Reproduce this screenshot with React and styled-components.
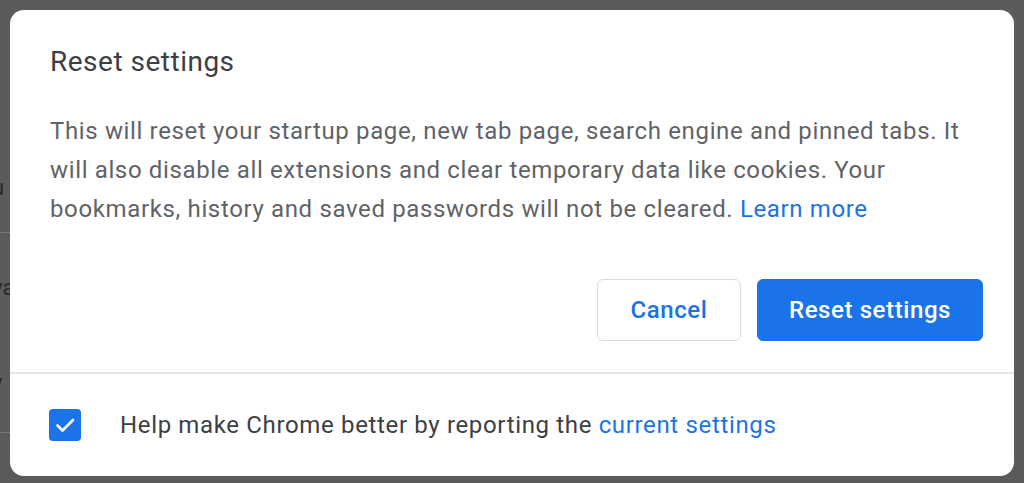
import React from "react";
import styled, { createGlobalStyle } from "styled-components";

const Global = createGlobalStyle`
  html, body { margin: 0; padding: 0; }
  body {
    width: 1024px;
    height: 483px;
    overflow: hidden;
    background: #5b5b5b;
    font-family: Roboto, "Noto Sans", "Liberation Sans", sans-serif;
  }
`;

const Backdrop = styled.div`
  position: relative;
  width: 1024px;
  height: 483px;
  background: #5b5b5b;
  overflow: hidden;
`;

const BehindText = styled.div`
  position: absolute;
  left: -8px;
  top: ${(p) => p.$top}px;
  font-size: 22px;
  color: #2a2a2a;
`;

const BehindLine = styled.div`
  position: absolute;
  left: 0;
  width: 12px;
  top: ${(p) => p.$top}px;
  height: 1px;
  background: #777;
`;

const Dialog = styled.div`
  position: absolute;
  left: 10px;
  top: 10px;
  width: 1004px;
  height: 466px;
  background: #fff;
  border-radius: 14px;
  box-sizing: border-box;
  display: flex;
  flex-direction: column;
  overflow: hidden;
`;

const Body = styled.div`
  padding: 34px 31px 0 40px;
  display: flex;
  flex-direction: column;
`;

const Title = styled.h1`
  margin: 0;
  font-size: 28px;
  font-weight: 400;
  color: #3c4043;
  line-height: 36px;
  letter-spacing: 0.5px;
`;

const Text = styled.p`
  margin: 32px 0 0;
  font-size: 24px;
  line-height: 39px;
  color: #5f6368;
  letter-spacing: 0.64px;
  white-space: nowrap;
`;

const Link = styled.a`
  color: #1a73e8;
  text-decoration: none;
`;

const Actions = styled.div`
  display: flex;
  justify-content: flex-end;
  gap: 16px;
  margin-top: 50px;
`;

const Button = styled.button`
  height: 62px;
  padding: 0;
  border-radius: 6px;
  font-family: inherit;
  font-size: 24px;
  font-weight: 500;
  letter-spacing: 0.6px;
  cursor: pointer;
  border: 1px solid ${(p) => (p.$primary ? "#1a73e8" : "#dadce0")};
  background: ${(p) => (p.$primary ? "#1a73e8" : "#fff")};
  color: ${(p) => (p.$primary ? "#fff" : "#1a73e8")};
  width: ${(p) => p.$w}px;
`;

const Divider = styled.div`
  margin-top: 31px;
  height: 2px;
  background: #e6e6e6;
`;

const Footer = styled.div`
  flex: 1;
  display: flex;
  align-items: center;
  padding: 0 0 0 39px;
  gap: 39px;
`;

const Check = styled.span`
  width: 32px;
  height: 32px;
  border-radius: 4px;
  background: #1a73e8;
  display: flex;
  align-items: center;
  justify-content: center;
  flex-shrink: 0;
`;

const FooterText = styled.span`
  font-size: 24px;
  letter-spacing: 0.65px;
  color: #3c4043;
`;

export default function App() {
  return (
    <>
      <Global />
      <Backdrop>
        <BehindText $top={175}>u</BehindText>
        <BehindLine $top={232} />
        <BehindText $top={275}>va</BehindText>
        <BehindText $top={370}>y</BehindText>
        <BehindLine $top={432} />
        <Dialog>
          <Body>
            <Title>Reset settings</Title>
            <Text>
              This will reset your startup page, new tab page, search engine and pinned tabs. It
              <br />
              will also disable all extensions and clear temporary data like cookies. Your
              <br />
              bookmarks, history and saved passwords will not be cleared.{" "}
              <Link href="#">Learn more</Link>
            </Text>
            <Actions>
              <Button $w={144}>Cancel</Button>
              <Button $primary $w={226}>Reset settings</Button>
            </Actions>
          </Body>
          <Divider />
          <Footer>
            <Check>
              <svg width="24" height="24" viewBox="0 0 24 24" fill="none">
                <path d="M4.5 12.5l5 5L20 7" stroke="#fff" strokeWidth="2.6" strokeLinecap="round" strokeLinejoin="round" />
              </svg>
            </Check>
            <FooterText>
              Help make Chrome better by reporting the <Link href="#">current settings</Link>
            </FooterText>
          </Footer>
        </Dialog>
      </Backdrop>
    </>
  );
}
